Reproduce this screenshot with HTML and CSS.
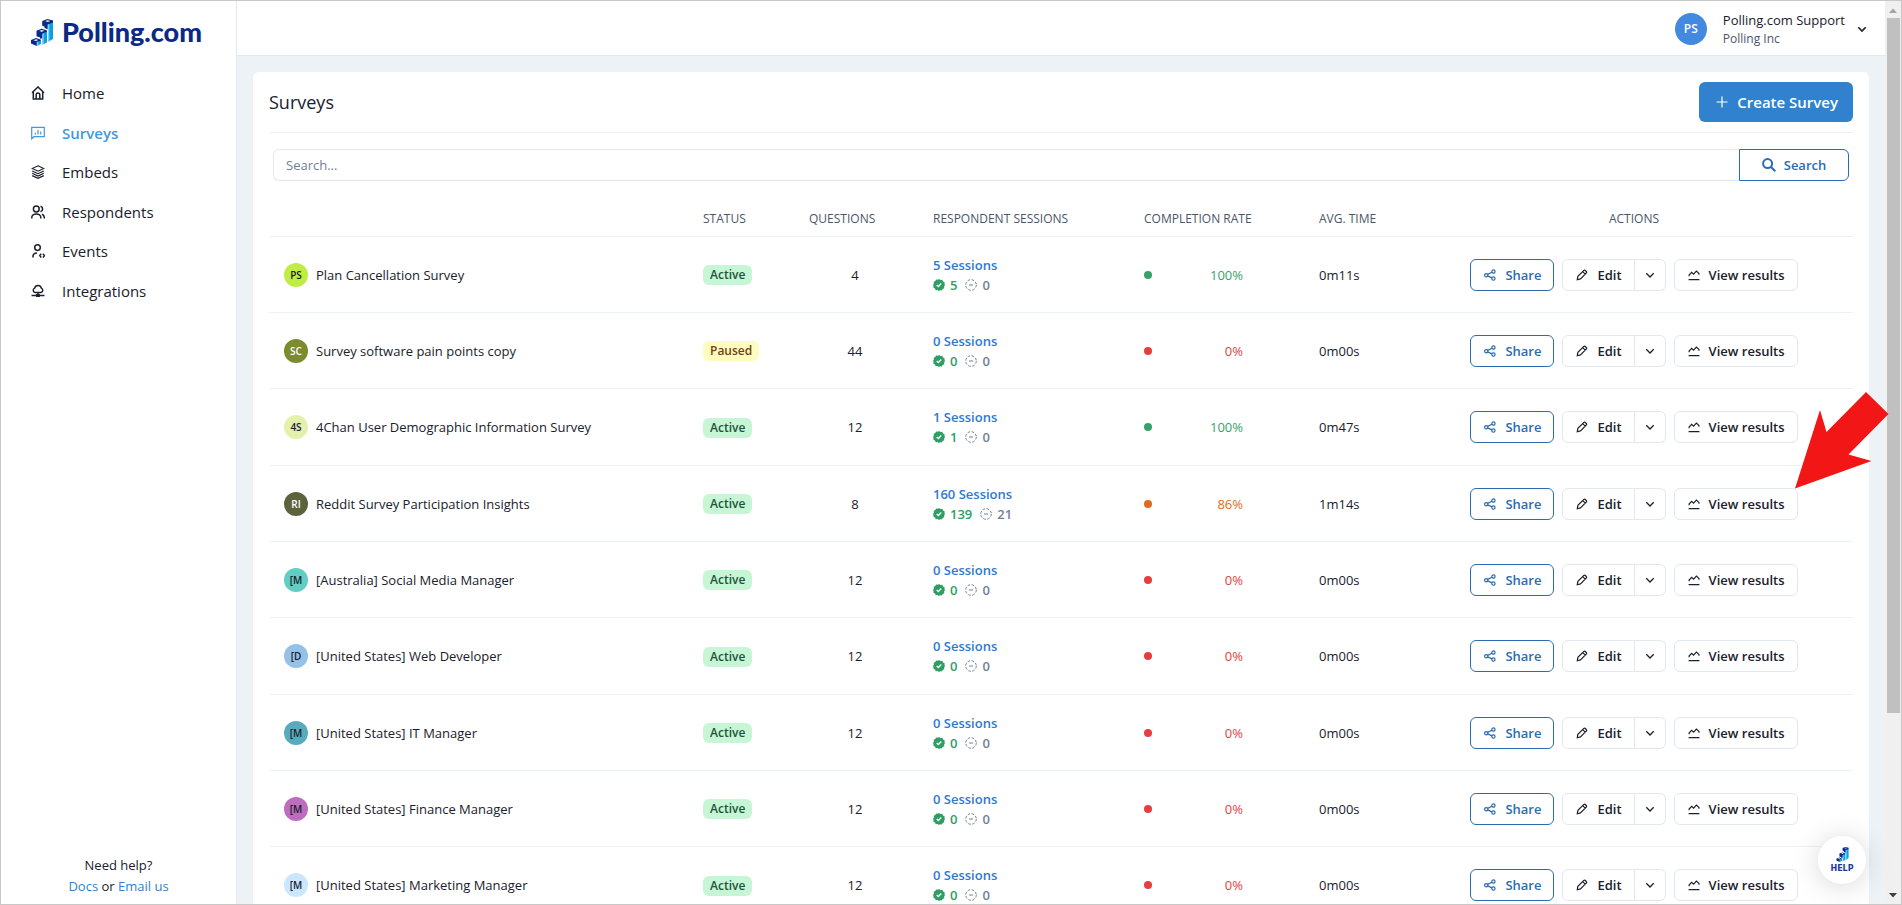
FILE: index.html
```html
<!DOCTYPE html>
<html lang="en">
<head>
<meta charset="utf-8">
<title>Surveys - Polling.com</title>
<link rel="stylesheet" href="styles.css">
</head>
<body>
<svg class="sprite" aria-hidden="true">
  <symbol id="i-logo" viewBox="0 0 22 27">
    <path fill="#0c9fe8" d="M6 22.500l4-2v4.500l-4 2zM11.500 13.500l4.500-2v12l-4.500 2.200zM17 4.500l5-2v17.500l-5 2.800z"/>
    <path fill="#7fd4fa" d="M6 22.500l1.200-.6v4.500l-1.200.6zM11.500 13.500l1.200-.5v12.100l-1.200.6zM17 4.500l1.300-.5v18l-1.300.8z"/>
    <path fill="#0a2a86" d="M0 21l5-2 4.500 1.500v1.300L5.800 23v4L0 24.500zM5.500 11.800l5-2 5.300 1.400v1.600l-4.600 2v4.400L9 19.800v-1.300l-3.500-1.200zM11.200 2l5.300-2L22 1.500v2l-5.300 2v4.700L13.500 9V7.500l-2.300-.8z"/>
    <path fill="#fff" d="M2.500 21.200l2.500-.9 2.300.7-2.400 1zM8.300 11.900l2.500-.9 2.500.7-2.500 1.100zM14.200 2.100l2.500-.9 2.500.7-2.500 1z"/>
  </symbol>
  <symbol id="i-home" viewBox="0 0 14 14"><path d="M1 6.800L7 1l6 5.800M2.300 6v7h9.400V6M5.200 13V8.700a1.800 1.800 0 0 1 3.600 0V13"/></symbol>
  <symbol id="i-survey" viewBox="0 0 14 14"><path d="M.7 12.800V1.300h12.600v9.400H3zM4.300 6.800v1.700M7 4v4.500M9.700 5.500v3"/></symbol>
  <symbol id="i-layers" viewBox="0 0 14 14"><path d="M7 .8l5.800 2.700L7 6.200 1.200 3.500zM1.200 6L7 8.700 12.800 6M1.200 8.300L7 11l5.800-2.700M1.200 10.600L7 13.300l5.800-2.700"/></symbol>
  <symbol id="i-users" viewBox="0 0 14 14"><circle cx="5.300" cy="4" r="2.900"/><path d="M.8 13.500v-1a4.500 3.600 0 0 1 9 0v1M9.500 1.200a2.900 2.900 0 0 1 0 5.600M11 9.200c1.500.6 2.300 1.700 2.300 3.300v1"/></symbol>
  <symbol id="i-event" viewBox="0 0 14 14"><circle cx="6.500" cy="3.600" r="2.800"/><path d="M2 13.500v-1c0-2 1.500-3.600 4-3.600M10.200 9.700l-1.400 1.900 1.400 1.900M12 9.700l1.400 1.900-1.400 1.900"/></symbol>
  <symbol id="i-cloud" viewBox="0 0 14 14"><path d="M4 8.500a2.300 2.300 0 0 1-.3-4.400 3.400 3.400 0 0 1 6.600 0 2.300 2.300 0 0 1-.3 4.400zM7 8.500v3M.5 11.500h13M5.800 10.800h2.400v1.500H5.800z"/></symbol>
  <symbol id="i-share" viewBox="0 0 14 14"><circle cx="2.600" cy="7.200" r="1.900"/><circle cx="11" cy="3" r="1.900"/><circle cx="11" cy="11.200" r="1.900"/><path d="M4.300 6.300l5-2.500M4.300 8l5 2.400"/></symbol>
  <symbol id="i-edit" viewBox="0 0 14 14"><path d="M1.500 12.500l.7-3.900 7-7c1-1 4 1.900 3 2.900l-7 7zM7.800 3l3 3"/></symbol>
  <symbol id="i-down" viewBox="0 0 10 10"><path d="M1.300 3.200L5 7l3.700-3.800"/></symbol>
  <symbol id="i-chart" viewBox="0 0 14 14"><path d="M1.300 8.500V7l3-3 2.200 2 3.300-3.500 3 2.700v1.500M.7 12.300h12.600"/></symbol>
  <symbol id="i-plus" viewBox="0 0 12 12"><path d="M6 .5v11M.5 6h11"/></symbol>
  <symbol id="i-search" viewBox="0 0 14 14"><circle cx="5.600" cy="5.600" r="4.500"/><path d="M9 9l4.300 4.300"/></symbol>
  <symbol id="i-done" viewBox="0 0 12 12"><path fill="#2f9e63" d="M6 0l1.500 1 1.800-.2.700 1.600 1.600.8-.1 1.700.5 1.100-.9 1.500.2 1.800-1.600.7-.9 1.500-1.700-.2-1.100.7-1.500-1-1.800.2-.7-1.600-1.600-.8.100-1.700L0 6l.9-1.500L.7 2.700l1.600-.7L3.200.5l1.700.2z"/><path fill="none" stroke="#fff" stroke-width="1.300" d="M3.700 6l1.600 1.500 3-3"/></symbol>
  <symbol id="i-part" viewBox="0 0 12 12"><circle cx="6" cy="6" r="5.300" stroke-dasharray="2.600 1.560"/><path d="M4 6h4"/></symbol>
</svg>

<div class="app">
  <aside class="sidebar">
    <a class="brand" href="#"><svg class="brand-mark"><use href="#i-logo"/></svg><span>Polling.com</span></a>
    <nav>
      <ul class="nav">
        <li><a href="#"><svg class="ico"><use href="#i-home"/></svg>Home</a></li>
        <li><a class="current" href="#"><svg class="ico thin"><use href="#i-survey"/></svg>Surveys</a></li>
        <li><a href="#"><svg class="ico thin"><use href="#i-layers"/></svg>Embeds</a></li>
        <li><a href="#"><svg class="ico"><use href="#i-users"/></svg>Respondents</a></li>
        <li><a href="#"><svg class="ico"><use href="#i-event"/></svg>Events</a></li>
        <li><a href="#"><svg class="ico"><use href="#i-cloud"/></svg>Integrations</a></li>
      </ul>
    </nav>
    <p class="support">Need help?<br><a href="#">Docs</a> or <a href="#">Email us</a></p>
  </aside>

  <div class="page">
    <header class="topbar">
      <button class="account" type="button">
        <span class="account-pic">PS</span>
        <span class="account-text"><span class="account-name">Polling.com Support</span><span class="account-org">Polling Inc</span></span>
        <svg class="chev big"><use href="#i-down"/></svg>
      </button>
    </header>
    <main class="content">
      <section class="card">
        <div class="card-head">
          <h1>Surveys</h1>
          <button class="create" type="button"><svg class="plus"><use href="#i-plus"/></svg>Create Survey</button>
        </div>
        <form class="search" role="search">
          <input type="search" placeholder="Search..." aria-label="Search surveys">
          <button type="button"><svg class="lens"><use href="#i-search"/></svg>Search</button>
        </form>
        <table class="surveys">
          <colgroup><col class="c-name"><col class="c-status"><col class="c-questions"><col class="c-sessions"><col class="c-rate"><col class="c-time"><col class="c-actions"></colgroup>
          <thead>
            <tr><th></th><th>STATUS</th><th>QUESTIONS</th><th>RESPONDENT SESSIONS</th><th>COMPLETION RATE</th><th>AVG. TIME</th><th class="center">ACTIONS</th></tr>
          </thead>
          <tbody>
            <tr>
              <td><div class="name"><span class="avatar lime">PS</span>Plan Cancellation Survey</div></td>
              <td><span class="badge active">Active</span></td>
              <td class="center">4</td>
              <td><a class="sessions" href="#">5 Sessions</a><div class="counts"><svg><use href="#i-done"/></svg><b>5</b><svg><use href="#i-part"/></svg><span>0</span></div></td>
              <td><div class="rate good"><i></i>100%</div></td>
              <td>0m11s</td>
              <td><div class="actions"><button class="btn share" type="button"><svg><use href="#i-share"/></svg>Share</button><div class="split"><button class="btn" type="button"><svg><use href="#i-edit"/></svg>Edit</button><button class="btn more" type="button" aria-label="More"><svg class="chev"><use href="#i-down"/></svg></button></div><button class="btn" type="button"><svg><use href="#i-chart"/></svg>View results</button></div></td>
            </tr>
            <tr>
              <td><div class="name"><span class="avatar olive">SC</span>Survey software pain points copy</div></td>
              <td><span class="badge paused">Paused</span></td>
              <td class="center">44</td>
              <td><a class="sessions" href="#">0 Sessions</a><div class="counts"><svg><use href="#i-done"/></svg><b>0</b><svg><use href="#i-part"/></svg><span>0</span></div></td>
              <td><div class="rate bad"><i></i>0%</div></td>
              <td>0m00s</td>
              <td><div class="actions"><button class="btn share" type="button"><svg><use href="#i-share"/></svg>Share</button><div class="split"><button class="btn" type="button"><svg><use href="#i-edit"/></svg>Edit</button><button class="btn more" type="button" aria-label="More"><svg class="chev"><use href="#i-down"/></svg></button></div><button class="btn" type="button"><svg><use href="#i-chart"/></svg>View results</button></div></td>
            </tr>
            <tr>
              <td><div class="name"><span class="avatar cream">4S</span>4Chan User Demographic Information Survey</div></td>
              <td><span class="badge active">Active</span></td>
              <td class="center">12</td>
              <td><a class="sessions" href="#">1 Sessions</a><div class="counts"><svg><use href="#i-done"/></svg><b>1</b><svg><use href="#i-part"/></svg><span>0</span></div></td>
              <td><div class="rate good"><i></i>100%</div></td>
              <td>0m47s</td>
              <td><div class="actions"><button class="btn share" type="button"><svg><use href="#i-share"/></svg>Share</button><div class="split"><button class="btn" type="button"><svg><use href="#i-edit"/></svg>Edit</button><button class="btn more" type="button" aria-label="More"><svg class="chev"><use href="#i-down"/></svg></button></div><button class="btn" type="button"><svg><use href="#i-chart"/></svg>View results</button></div></td>
            </tr>
            <tr>
              <td><div class="name"><span class="avatar moss">RI</span>Reddit Survey Participation Insights</div></td>
              <td><span class="badge active">Active</span></td>
              <td class="center">8</td>
              <td><a class="sessions" href="#">160 Sessions</a><div class="counts"><svg><use href="#i-done"/></svg><b>139</b><svg><use href="#i-part"/></svg><span>21</span></div></td>
              <td><div class="rate fair"><i></i>86%</div></td>
              <td>1m14s</td>
              <td><div class="actions"><button class="btn share" type="button"><svg><use href="#i-share"/></svg>Share</button><div class="split"><button class="btn" type="button"><svg><use href="#i-edit"/></svg>Edit</button><button class="btn more" type="button" aria-label="More"><svg class="chev"><use href="#i-down"/></svg></button></div><button class="btn" type="button"><svg><use href="#i-chart"/></svg>View results</button></div></td>
            </tr>
            <tr>
              <td><div class="name"><span class="avatar teal">[M</span>[Australia] Social Media Manager</div></td>
              <td><span class="badge active">Active</span></td>
              <td class="center">12</td>
              <td><a class="sessions" href="#">0 Sessions</a><div class="counts"><svg><use href="#i-done"/></svg><b>0</b><svg><use href="#i-part"/></svg><span>0</span></div></td>
              <td><div class="rate bad"><i></i>0%</div></td>
              <td>0m00s</td>
              <td><div class="actions"><button class="btn share" type="button"><svg><use href="#i-share"/></svg>Share</button><div class="split"><button class="btn" type="button"><svg><use href="#i-edit"/></svg>Edit</button><button class="btn more" type="button" aria-label="More"><svg class="chev"><use href="#i-down"/></svg></button></div><button class="btn" type="button"><svg><use href="#i-chart"/></svg>View results</button></div></td>
            </tr>
            <tr>
              <td><div class="name"><span class="avatar sky">[D</span>[United States] Web Developer</div></td>
              <td><span class="badge active">Active</span></td>
              <td class="center">12</td>
              <td><a class="sessions" href="#">0 Sessions</a><div class="counts"><svg><use href="#i-done"/></svg><b>0</b><svg><use href="#i-part"/></svg><span>0</span></div></td>
              <td><div class="rate bad"><i></i>0%</div></td>
              <td>0m00s</td>
              <td><div class="actions"><button class="btn share" type="button"><svg><use href="#i-share"/></svg>Share</button><div class="split"><button class="btn" type="button"><svg><use href="#i-edit"/></svg>Edit</button><button class="btn more" type="button" aria-label="More"><svg class="chev"><use href="#i-down"/></svg></button></div><button class="btn" type="button"><svg><use href="#i-chart"/></svg>View results</button></div></td>
            </tr>
            <tr>
              <td><div class="name"><span class="avatar cyan">[M</span>[United States] IT Manager</div></td>
              <td><span class="badge active">Active</span></td>
              <td class="center">12</td>
              <td><a class="sessions" href="#">0 Sessions</a><div class="counts"><svg><use href="#i-done"/></svg><b>0</b><svg><use href="#i-part"/></svg><span>0</span></div></td>
              <td><div class="rate bad"><i></i>0%</div></td>
              <td>0m00s</td>
              <td><div class="actions"><button class="btn share" type="button"><svg><use href="#i-share"/></svg>Share</button><div class="split"><button class="btn" type="button"><svg><use href="#i-edit"/></svg>Edit</button><button class="btn more" type="button" aria-label="More"><svg class="chev"><use href="#i-down"/></svg></button></div><button class="btn" type="button"><svg><use href="#i-chart"/></svg>View results</button></div></td>
            </tr>
            <tr>
              <td><div class="name"><span class="avatar orchid">[M</span>[United States] Finance Manager</div></td>
              <td><span class="badge active">Active</span></td>
              <td class="center">12</td>
              <td><a class="sessions" href="#">0 Sessions</a><div class="counts"><svg><use href="#i-done"/></svg><b>0</b><svg><use href="#i-part"/></svg><span>0</span></div></td>
              <td><div class="rate bad"><i></i>0%</div></td>
              <td>0m00s</td>
              <td><div class="actions"><button class="btn share" type="button"><svg><use href="#i-share"/></svg>Share</button><div class="split"><button class="btn" type="button"><svg><use href="#i-edit"/></svg>Edit</button><button class="btn more" type="button" aria-label="More"><svg class="chev"><use href="#i-down"/></svg></button></div><button class="btn" type="button"><svg><use href="#i-chart"/></svg>View results</button></div></td>
            </tr>
            <tr>
              <td><div class="name"><span class="avatar ice">[M</span>[United States] Marketing Manager</div></td>
              <td><span class="badge active">Active</span></td>
              <td class="center">12</td>
              <td><a class="sessions" href="#">0 Sessions</a><div class="counts"><svg><use href="#i-done"/></svg><b>0</b><svg><use href="#i-part"/></svg><span>0</span></div></td>
              <td><div class="rate bad"><i></i>0%</div></td>
              <td>0m00s</td>
              <td><div class="actions"><button class="btn share" type="button"><svg><use href="#i-share"/></svg>Share</button><div class="split"><button class="btn" type="button"><svg><use href="#i-edit"/></svg>Edit</button><button class="btn more" type="button" aria-label="More"><svg class="chev"><use href="#i-down"/></svg></button></div><button class="btn" type="button"><svg><use href="#i-chart"/></svg>View results</button></div></td>
            </tr>
          </tbody>
        </table>
      </section>
    </main>
  </div>

  <div class="scrollbar" aria-hidden="true">
    <svg class="scroll-arrow up" viewBox="0 0 8 5"><path d="M0 5l4-4.500L8 5z"/></svg>
    <div class="thumb"></div>
    <svg class="scroll-arrow down" viewBox="0 0 8 5"><path d="M0 0l4 4.500L8 0z"/></svg>
  </div>

  <button class="help" type="button"><svg><use href="#i-logo"/></svg>HELP</button>
  <svg class="pointer" viewBox="0 0 94 97" aria-hidden="true"><path fill="#f31616" d="M0 96.500L25 18l6.500 22L71 0l22.500 22L53.500 62.500 76.500 69z"/></svg>
</div>
</body>
</html>
```
FILE: styles.css
```css
* { box-sizing: border-box; }

body {
  margin: 0;
  color: #1a202c;
  background: #fff;
  font: 13px/20px "Open Sans", "Noto Sans", sans-serif;
}

button, input { font: inherit; color: inherit; cursor: pointer; }
a { color: #3182ce; text-decoration: none; }
svg { flex: none; fill: none; stroke: currentColor; }
.sprite { position: absolute; width: 0; height: 0; }

.app {
  position: relative;
  display: grid;
  grid-template-columns: 236px minmax(0, 1fr) 16px;
  height: 100vh;
  overflow: hidden;
  border: 1px solid #c8c8c8;
}

/* Sidebar */
.sidebar {
  display: flex;
  flex-direction: column;
  min-height: 0;
  border-right: 1px solid #e2e8f0;
}
.brand {
  display: flex;
  align-items: center;
  gap: 9px;
  height: 62px;
  padding-left: 30px;
  color: #0a2a86;
  font: 900 27px/32px Lato, sans-serif;
}
.brand-mark { width: 22px; height: 27px; stroke: none; }
.nav { margin: 10px 0 0; padding: 0; list-style: none; }
.nav a {
  display: flex;
  align-items: center;
  gap: 17px;
  height: 40px;
  padding-left: 30px;
  color: #1a202c;
  font-size: 15px;
}
.nav li:nth-child(even) a { height: 39px; }
.nav a.current { color: #4299e1; font-weight: 600; }
.ico { width: 14px; height: 14px; stroke-width: 1.5; }
.ico.thin { stroke-width: 1.2; }
.support { margin: auto 0 7px; text-align: center; line-height: 21px; }

/* Page */
.page { display: flex; flex-direction: column; min-height: 0; background: #edf2f7; }
.topbar {
  display: flex;
  justify-content: flex-end;
  flex: none;
  height: 55px;
  padding: 2px 18px 0 0;
  background: #fff;
  border-bottom: 1px solid #e2e8f0;
}
.account {
  display: flex;
  align-items: center;
  padding: 0;
  text-align: left;
  background: none;
  border: 0;
}
.account-pic {
  display: grid;
  place-items: center;
  width: 32px;
  height: 32px;
  margin-right: 16px;
  border-radius: 50%;
  color: #fff;
  background: #4489e0;
  font-size: 12px;
  font-weight: 600;
}
.account-text { display: flex; flex-direction: column; margin-right: 12px; }
.account-name { font-size: 13px; }
.account-org { font-size: 12px; line-height: 18px; color: #4a5568; }
.chev { width: 10px; height: 10px; stroke-width: 1.3; }
.chev.big { stroke-width: 1.6; }

.content { min-height: 0; padding: 16px 16px 0; overflow: hidden; }
.card { padding: 0 16px; background: #fff; border-radius: 6px; }
.card-head {
  display: flex;
  align-items: center;
  justify-content: space-between;
  height: 61px;
  border-bottom: 1px solid #edf2f7;
}
h1 { margin: 0; font-size: 18px; font-weight: 400; line-height: 24px; }
.create {
  display: flex;
  align-items: center;
  gap: 9px;
  height: 40px;
  padding: 0 15px 0 17px;
  color: #fff;
  background: #3182ce;
  border: 0;
  border-radius: 6px;
  font-size: 15px;
  font-weight: 600;
}
.plus { width: 12px; height: 12px; stroke-width: 1.2; }

.search { display: flex; margin: 16px 4px 0; }
.search input {
  flex: 1;
  min-width: 0;
  height: 32px;
  padding: 0 12px;
  background: #fff;
  border: 1px solid #e2e8f0;
  border-right: 0;
  border-radius: 6px 0 0 6px;
  outline: 0;
}
.search input::placeholder { color: #718096; opacity: 1; }
.search button {
  display: flex;
  align-items: center;
  justify-content: center;
  gap: 8px;
  width: 110px;
  height: 32px;
  padding: 0;
  color: #2b6cb0;
  background: #fff;
  border: 1px solid #2b6cb0;
  border-radius: 0 6px 6px 0;
  font-weight: 600;
}
.lens { width: 14px; height: 14px; stroke-width: 2; }

/* Table */
.surveys {
  width: 100%;
  margin-top: 20px;
  table-layout: fixed;
  border-collapse: separate;
  border-spacing: 0;
}
.c-name { width: 418px; }
.c-status { width: 106px; }
.c-questions { width: 124px; }
.c-sessions { width: 211px; }
.c-rate { width: 175px; }
.c-time { width: 112px; }
.c-actions { width: 438px; }
.surveys th, .surveys td { padding: 0 16px; border-bottom: 1px solid #edf2f7; }
.surveys td:first-child { padding-left: 15px; }
.surveys th {
  height: 36px;
  color: #4a5568;
  font-size: 12px;
  font-weight: 400;
  line-height: 16px;
  text-align: left;
  white-space: nowrap;
}
.surveys td { height: 76px; }
.surveys tbody tr:nth-child(3n) td { height: 77px; }
.surveys .center { text-align: center; }

.name { display: flex; align-items: center; gap: 8px; white-space: nowrap; }
.avatar {
  display: grid;
  place-items: center;
  width: 24px;
  height: 24px;
  border-radius: 50%;
  font-size: 10px;
  font-weight: 600;
}
.lime { background: #bfee43; }
.olive { background: #7c8b2c; color: #fff; }
.cream { background: #e4f1ac; }
.moss { background: #5b633c; color: #fff; }
.teal { background: #62cdc2; }
.sky { background: #94c1e8; }
.cyan { background: #58abbd; }
.orchid { background: #be6cbd; }
.ice { background: #cbe7ff; }

.badge {
  display: inline-block;
  padding: 0 7px;
  border-radius: 6px;
  font-size: 12px;
  font-weight: 600;
}
.active { color: #22543d; background: #c6f6d5; }
.paused { color: #744210; background: #fefcbf; }

.sessions { font-weight: 600; color: #3079d0; }
.counts { display: flex; align-items: center; gap: 5px; color: #718096; }
.counts b { margin-right: 3px; color: #2f9e63; font-weight: 600; }
.counts span { font-weight: 600; }
.counts svg { width: 12px; height: 12px; }
.counts svg:first-child { stroke: none; }

.rate { display: flex; align-items: center; justify-content: space-between; width: 99px; }
.rate i { width: 8px; height: 8px; border-radius: 50%; background: currentColor; }
.good { color: #38a169; }
.bad { color: #e53e3e; }
.fair { color: #dd6b20; }

.actions { display: flex; justify-content: center; gap: 8px; white-space: nowrap; }
.split { display: flex; }
.btn {
  display: flex;
  align-items: center;
  gap: 9px;
  height: 32px;
  padding: 0 12px 0 13px;
  background: #fff;
  border: 1px solid #e2e8f0;
  border-radius: 6px;
  font-weight: 600;
}
.btn svg { width: 12px; height: 12px; stroke-width: 1.4; }
.btn .chev { width: 10px; height: 10px; stroke-width: 1.3; }
.share { color: #2b6cb0; border-color: #2b6cb0; }
.split .btn:first-child { border-radius: 6px 0 0 6px; }
.split .more { width: 31px; padding: 0 10px; border-left: 0; border-radius: 0 6px 6px 0; }

/* Scrollbar */
.scrollbar {
  display: flex;
  flex-direction: column;
  align-items: center;
  background: #f0f0f0;
}
.thumb { width: 13px; flex: 0 0 77%; background: #c0c0c0; }
.scroll-arrow { width: 8px; height: 5px; stroke: none; }
.up { margin: 7px 0 5px; fill: #a3a3a3; }
.down { margin: auto 0 6px; fill: #404040; }

/* Floating items */
.help {
  position: absolute;
  right: 35px;
  bottom: 20px;
  display: flex;
  flex-direction: column;
  align-items: center;
  justify-content: center;
  gap: 2px;
  width: 48px;
  height: 48px;
  padding: 0;
  color: #1d3a94;
  background: #fff;
  border: 0;
  border-radius: 50%;
  box-shadow: 0 2px 28px rgba(0, 0, 0, .16);
  font: bold 8px/10px "DejaVu Sans", sans-serif;
}
.help svg { width: 13px; height: 15px; stroke: none; }
.pointer { position: absolute; top: 391px; right: 12px; width: 94px; height: 97px; stroke: none; }
```
